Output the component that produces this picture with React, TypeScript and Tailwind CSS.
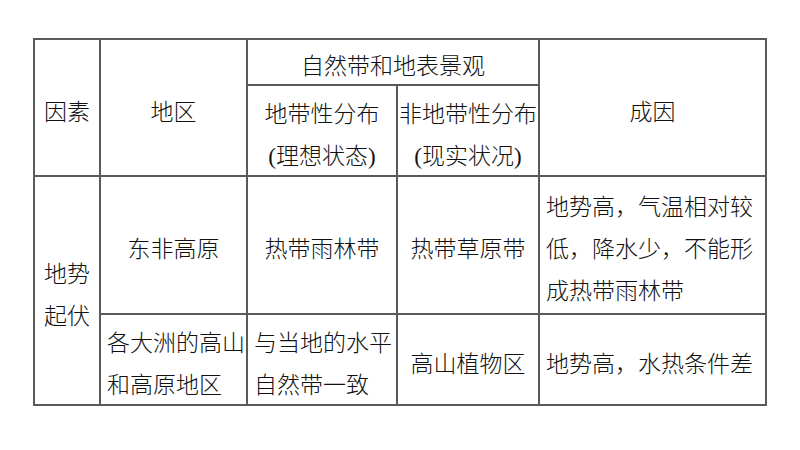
import React from "react";

const font = {
  fontFamily: '"Liberation Serif", "Noto Sans CJK SC", serif',
};

function Cell({
  className = "",
  children,
}: {
  className?: string;
  children: React.ReactNode;
}) {
  return (
    <div
      className={
        "flex items-center justify-center border-r-2 border-b-2 border-[#5a5a5a] pt-[10px] text-center " +
        className
      }
    >
      {children}
    </div>
  );
}

export default function App() {
  return (
    <div className="w-[800px] h-[450px] bg-white overflow-hidden">
      <div
        style={font}
        className="ml-[33px] mt-[38px] grid w-max grid-cols-[66px_147px_150px_142px_227px] grid-rows-[46px_91px_138px_91px] border-l-2 border-t-2 border-[#5a5a5a] text-[23px] font-light leading-[42px] text-[#111]"
      >
        <Cell className="col-start-1 row-start-1 row-span-2">因素</Cell>
        <Cell className="col-start-2 row-start-1 row-span-2">地区</Cell>
        <Cell className="col-start-3 col-span-2 row-start-1">自然带和地表景观</Cell>
        <Cell className="col-start-5 row-start-1 row-span-2">成因</Cell>
        <Cell className="col-start-3 row-start-2">
          <div className="whitespace-nowrap">
            地带性分布
            <br />
            (理想状态)
          </div>
        </Cell>
        <Cell className="col-start-4 row-start-2">
          <div className="whitespace-nowrap">
            非地带性分布
            <br />
            (现实状况)
          </div>
        </Cell>

        <Cell className="col-start-1 row-start-3 row-span-2">
          <div>
            地势
            <br />
            起伏
          </div>
        </Cell>
        <Cell className="col-start-2 row-start-3">东非高原</Cell>
        <Cell className="col-start-3 row-start-3">热带雨林带</Cell>
        <Cell className="col-start-4 row-start-3">热带草原带</Cell>
        <Cell className="col-start-5 row-start-3 !justify-start pl-[6px] text-left">
          <div className="whitespace-nowrap">
            地势高，气温相对较
            <br />
            低，降水少，不能形
            <br />
            成热带雨林带
          </div>
        </Cell>

        <Cell className="col-start-2 row-start-4 !justify-start pl-[6px] text-left">
          <div className="whitespace-nowrap">
            各大洲的高山
            <br />
            和高原地区
          </div>
        </Cell>
        <Cell className="col-start-3 row-start-4 !justify-start pl-[6px] text-left">
          <div className="whitespace-nowrap">
            与当地的水平
            <br />
            自然带一致
          </div>
        </Cell>
        <Cell className="col-start-4 row-start-4">高山植物区</Cell>
        <Cell className="col-start-5 row-start-4 !justify-start pl-[6px] text-left">
          地势高，水热条件差
        </Cell>
      </div>
    </div>
  );
}
